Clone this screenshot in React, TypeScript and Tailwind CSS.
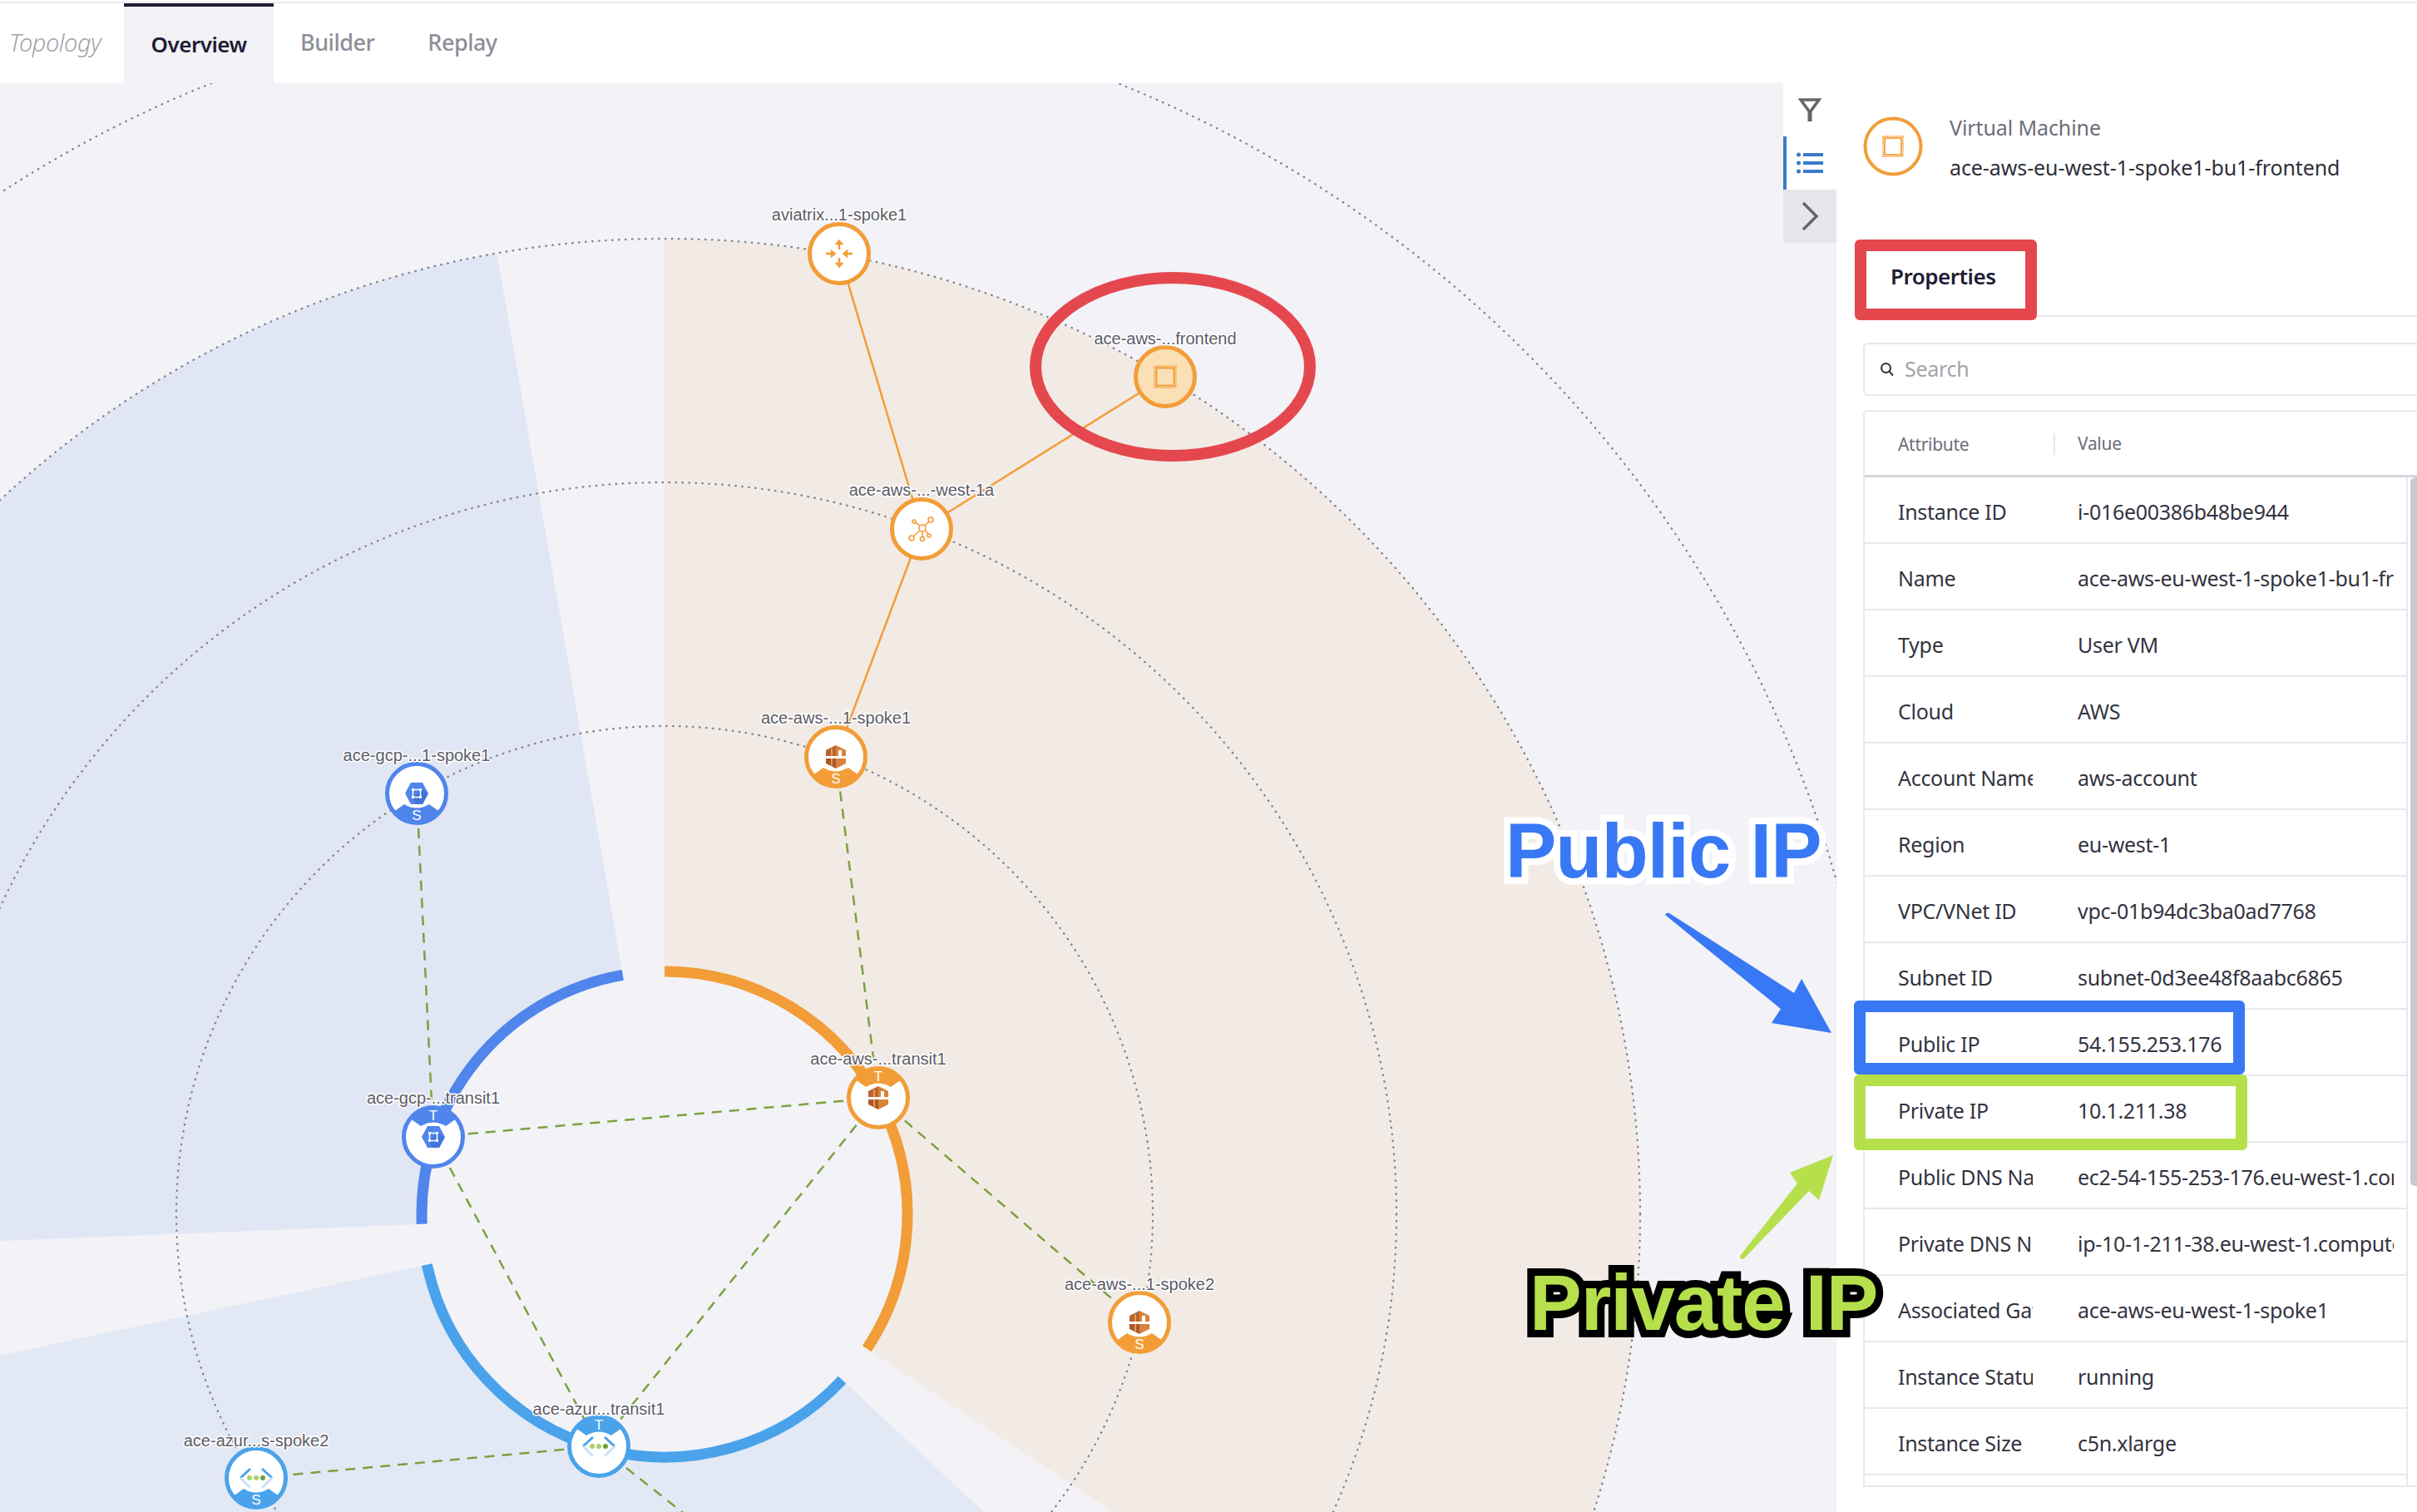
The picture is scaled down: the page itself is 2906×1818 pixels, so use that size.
import React from 'react';

const CX = 799;
const CY = 1460;

const pt = (r: number, deg: number) => {
  const a = (deg * Math.PI) / 180;
  return [CX + r * Math.cos(a), CY + r * Math.sin(a)];
};

// annular sector, angles clockwise from +x
const sector = (r0: number, r1: number, a0: number, a1: number) => {
  const [x0, y0] = pt(r1, a0);
  const [x1, y1] = pt(r1, a1);
  const [x2, y2] = pt(r0, a1);
  const [x3, y3] = pt(r0, a0);
  const large = a1 - a0 > 180 ? 1 : 0;
  return `M${x0} ${y0}A${r1} ${r1} 0 ${large} 1 ${x1} ${y1}L${x2} ${y2}A${r0} ${r0} 0 ${large} 0 ${x3} ${y3}Z`;
};

const arc = (r: number, a0: number, a1: number) => {
  const [x0, y0] = pt(r, a0);
  const [x1, y1] = pt(r, a1);
  const large = a1 - a0 > 180 ? 1 : 0;
  return `M${x0} ${y0}A${r} ${r} 0 ${large} 1 ${x1} ${y1}`;
};

const ORANGE = '#f29d38';
const GCP = '#5085ec';
const AZURE = '#4aa3ea';

const ChipIcon = () => (
  <g fill="none" stroke={ORANGE}>
    <rect x="-12.5" y="-12.5" width="25" height="25" strokeWidth="2.5" strokeDasharray="1.2 1.2" />
    <rect x="-10.5" y="-10.5" width="21" height="21" strokeWidth="1.8" />
  </g>
);

const ArrowsIcon = () => (
  <g fill={ORANGE} stroke={ORANGE} strokeWidth="2.5">
    <path d="M0 -5V-12M-16 0H-9M16 0H9M0 5V12" fill="none" />
    <path d="M0 -17L-5 -11H5ZM-4 0L-10 -5V5ZM4 0L10 -5V5ZM0 17L-5 11H5Z" strokeWidth="0.5" />
  </g>
);

const NetworkIcon = () => (
  <g fill="none" stroke={ORANGE} strokeWidth="1.6">
    <circle cx="1" cy="-1" r="4" />
    <circle cx="11" cy="-11" r="3" />
    <circle cx="-9" cy="-9" r="2" />
    <circle cx="-12" cy="11" r="3" />
    <circle cx="1" cy="12" r="2.5" />
    <circle cx="9" cy="8" r="2" />
    <path d="M4 -4L9 -9M-2 -4L-8 -8M-2 2L-10 9M1 3V10M4 1L8 6" />
  </g>
);

const AwsIcon = () => (
  <g>
    <path d="M-12 -8L0 -14V-1H-12Z" fill="#b8642c" />
    <path d="M0 -14L12 -8V-1H0Z" fill="#d98239" />
    <path d="M3 -8H7V-1H3Z" fill="#fff" />
    <path d="M-12 2H0V14L-12 8Z" fill="#a9592a" />
    <path d="M0 2H12V8L0 14Z" fill="#d98239" />
    <path d="M-5 -10V-1M-5 2V11" stroke="#e39a58" strokeWidth="2" />
  </g>
);

const GcpIcon = () => (
  <g>
    <path d="M-14 0L-7 -13H7L14 0L7 13H-7Z" fill={GCP} />
    <path d="M5 -5L14 0L7 13H-1L-5 5Z" fill="#4274da" />
    <rect x="-4.5" y="-4.5" width="9" height="9" fill="none" stroke="#fff" strokeWidth="1.5" />
    <path d="M-6 -6h3v3h-3zM3 -6h3v3h-3zM-6 3h3v3h-3zM3 3h3v3h-3z" fill="#fff" />
  </g>
);

const AzureIcon = () => (
  <g fill="none" strokeWidth="3">
    <path d="M-7 -11L-19 0M7 -11L19 0" stroke={AZURE} />
    <path d="M-19 0L-7 12M19 0L7 12" stroke="#c9e3f9" />
    <circle cx="-8" cy="0" r="3" fill="#a9d26a" stroke="none" />
    <circle cx="0" cy="0" r="3" fill="#a9d26a" stroke="none" />
    <circle cx="8" cy="0" r="3" fill="#6f9e3a" stroke="none" />
  </g>
);

type NodeProps = {
  x: number;
  y: number;
  label: string;
  labelY: number;
  color: string;
  badge?: 'S' | 'T';
  fill?: string;
  icon: React.ReactNode;
};

const Node = ({ x, y, label, labelY, color, badge, fill, icon }: NodeProps) => (
  <g>
    <g transform={`translate(${x} ${y})`}>
      <circle r="35.5" fill={fill || '#fff'} stroke={color} strokeWidth="5" />
      {badge === 'S' && (
        <>
          <path d="M-29 23L-15 13Q0 22 15 13L29 23A37 37 0 0 1 -29 23Z" fill={color} />
          <text y="32" textAnchor="middle" fontSize="17" fill="#fff" fontFamily="Liberation Sans, sans-serif">S</text>
        </>
      )}
      {badge === 'T' && (
        <>
          <path d="M-29 -23L-15 -13Q0 -22 15 -13L29 -23A37 37 0 0 0 -29 -23Z" fill={color} />
          <text y="-20" textAnchor="middle" fontSize="17" fill="#fff" fontFamily="Liberation Sans, sans-serif">T</text>
        </>
      )}
      {icon}
    </g>
    <text
      x={x}
      y={labelY + 7}
      textAnchor="middle"
      fontSize="20"
      fill="#5c5c66"
      stroke="#fff"
      strokeWidth="3"
      paintOrder="stroke"
      strokeLinejoin="round"
      fontFamily="Liberation Sans, sans-serif"
    >
      {label}
    </text>
  </g>
);

const dashed: number[][] = [
  [1005, 910, 1056, 1320],
  [501, 954, 521, 1367],
  [521, 1367, 1056, 1320],
  [521, 1367, 720, 1739],
  [1056, 1320, 720, 1739],
  [1056, 1320, 1370, 1590],
  [720, 1739, 308, 1777],
  [720, 1739, 825, 1822],
];

const solid: number[][] = [
  [1009, 305, 1108, 636],
  [1108, 636, 1401, 453],
  [1108, 636, 1005, 910],
];

const Topology = () => (
  <svg className="block h-full w-full" viewBox="0 100 2208 1718">
    <path d={sector(292, 1173, -90, 33.6)} fill="#f2ebe5" />
    <path d={sector(292, 1173, -182.3, -99.9)} fill="#e0e6f4" />
    <path d={sector(292, 1173, 43, 168)} fill="#e2e9f5" />
    {[587, 880, 1173, 1465].map((r) => (
      <circle key={r} cx={CX} cy={CY} r={r} fill="none" stroke="#85858e" strokeWidth="2.4" strokeLinecap="round" strokeDasharray="0.5 7.5" />
    ))}
    <path d={arc(292, -90, 33.6)} fill="none" stroke={ORANGE} strokeWidth="13" />
    <path d={arc(292, -182.3, -99.9)} fill="none" stroke={GCP} strokeWidth="13" />
    <path d={arc(292, 43, 168)} fill="none" stroke={AZURE} strokeWidth="13" />
    {dashed.map(([a, b, c, d], i) => (
      <line key={i} x1={a} y1={b} x2={c} y2={d} stroke="#7ba23f" strokeWidth="2.5" strokeDasharray="12 9" />
    ))}
    {solid.map(([a, b, c, d], i) => (
      <line key={i} x1={a} y1={b} x2={c} y2={d} stroke={ORANGE} strokeWidth="2.5" />
    ))}
    <Node x={1009} y={305} labelY={258} label="aviatrix...1-spoke1" color={ORANGE} icon={<ArrowsIcon />} />
    <Node x={1401} y={453} labelY={407} label="ace-aws-...frontend" color={ORANGE} fill="#fbdfb5" icon={<ChipIcon />} />
    <Node x={1108} y={636} labelY={589} label="ace-aws-...-west-1a" color={ORANGE} icon={<NetworkIcon />} />
    <Node x={1005} y={910} labelY={863} label="ace-aws-...1-spoke1" color={ORANGE} badge="S" icon={<AwsIcon />} />
    <Node x={1056} y={1320} labelY={1273} label="ace-aws-...transit1" color={ORANGE} badge="T" icon={<AwsIcon />} />
    <Node x={1370} y={1590} labelY={1544} label="ace-aws-...1-spoke2" color={ORANGE} badge="S" icon={<AwsIcon />} />
    <Node x={501} y={954} labelY={908} label="ace-gcp-...1-spoke1" color={GCP} badge="S" icon={<GcpIcon />} />
    <Node x={521} y={1367} labelY={1320} label="ace-gcp-...transit1" color={GCP} badge="T" icon={<GcpIcon />} />
    <Node x={720} y={1739} labelY={1694} label="ace-azur...transit1" color={AZURE} badge="T" icon={<AzureIcon />} />
    <Node x={308} y={1777} labelY={1732} label="ace-azur...s-spoke2" color={AZURE} badge="S" icon={<AzureIcon />} />
  </svg>
);

const rows = [
  ['Instance ID', 'i-016e00386b48be944'],
  ['Name', 'ace-aws-eu-west-1-spoke1-bu1-frontend'],
  ['Type', 'User VM'],
  ['Cloud', 'AWS'],
  ['Account Name', 'aws-account'],
  ['Region', 'eu-west-1'],
  ['VPC/VNet ID', 'vpc-01b94dc3ba0ad7768'],
  ['Subnet ID', 'subnet-0d3ee48f8aabc6865'],
  ['Public IP', '54.155.253.176'],
  ['Private IP', '10.1.211.38'],
  ['Public DNS Name', 'ec2-54-155-253-176.eu-west-1.compute.amazonaws.com'],
  ['Private DNS Name', 'ip-10-1-211-38.eu-west-1.compute.internal'],
  ['Associated Gateway', 'ace-aws-eu-west-1-spoke1'],
  ['Instance Status', 'running'],
  ['Instance Size', 'c5n.xlarge'],
];

const Toolbar = () => (
  <div className="absolute right-0 top-0 flex w-16 flex-col">
    <div className="flex h-16 items-center justify-center bg-white">
      <svg width="30" height="30" viewBox="0 0 30 30" fill="none" stroke="#666" strokeWidth="3.5">
        <path d="M4 3H26L15 18Z" />
        <path d="M15 17V29" strokeWidth="5" />
      </svg>
    </div>
    <div className="flex h-16 items-center justify-center border-l-4 border-[#3b7bc8] bg-white pr-1">
      <svg width="32" height="26" viewBox="0 0 32 26" fill="#3b7bc8">
        <circle cx="2.5" cy="3" r="2.5" />
        <circle cx="2.5" cy="13" r="2.5" />
        <circle cx="2.5" cy="23" r="2.5" />
        <rect x="8" y="1" width="24" height="4" />
        <rect x="8" y="11" width="24" height="4" />
        <rect x="8" y="21" width="24" height="4" />
      </svg>
    </div>
    <div className="flex h-16 items-center justify-center bg-[#e6e6ea]">
      <svg width="22" height="36" viewBox="0 0 22 36" fill="none" stroke="#666" strokeWidth="3.5">
        <path d="M3 2L19 18L3 34" />
      </svg>
    </div>
  </div>
);

const DetailPanel = () => (
  <div className="h-full w-[698px] shrink-0 overflow-hidden bg-white">
    <div className="flex h-[188px] items-start pl-8 pt-[37px]">
      <svg width="72" height="72" viewBox="-36 -36 72 72" className="mt-[3px] shrink-0">
        <circle r="33.5" fill="#fff" stroke={ORANGE} strokeWidth="4" />
        <g transform="scale(0.95)">
          <ChipIcon />
        </g>
      </svg>
      <div className="ml-[32px] tracking-[-0.1px]">
        <div className="text-[25px] leading-[32px] text-[#6d6d78]">Virtual Machine</div>
        <div className="mt-4 text-[25px] leading-[32px] text-[#2f2f3a]">ace-aws-eu-west-1-spoke1-bu1-frontend</div>
      </div>
    </div>
    <div className="flex h-[93px]">
      <div className="flex w-[241px] shrink-0 items-center pb-1 pl-[65px] text-[26px] font-semibold tracking-[-0.5px] text-[#1f1c33]">
        Properties
      </div>
      <div className="flex-1 border-b-2 border-[#e8e8ee]" />
    </div>
    <div className="ml-8 mt-[31px] flex h-[64px] w-[720px] items-center gap-[9px] rounded-md border-2 border-[#e8e8ee] pl-[18px]">
      <svg width="18" height="18" viewBox="0 0 18 18" fill="none" stroke="#33333f" strokeWidth="2">
        <circle cx="7.5" cy="7.5" r="5.5" />
        <path d="M11.5 11.5L16 16.5" />
      </svg>
      <span className="ml-[3px] text-[25px] tracking-[-0.3px] text-[#a3a3ab]">Search</span>
    </div>
    <div className="ml-8 mt-[17px] w-[720px] rounded-t-md border-l-2 border-t-2 border-[#e8e8ee]">
      <div className="flex h-[79px] items-center border-b-[3px] border-[#d6d6de] pl-[40px] pt-[2px] text-[21px] tracking-[-0.3px] text-[#6d6d78]">
        <span className="w-[189px] border-r-2 border-[#e8e8ee] leading-[26px]">Attribute</span>
        <span className="pl-[27px]">Value</span>
      </div>
      <div className="relative h-[1214px] w-[666px]">
        {rows.map(([k, v]) => (
          <div key={k} className="flex h-20 w-[653px] items-center border-b-2 border-[#e8e8ee] pl-[40px] pt-[5px] text-[25px] tracking-[-0.3px] text-[#33333f]">
            <span className="w-[162px] shrink-0 overflow-hidden whitespace-nowrap">{k}</span>
            <span className="ml-[54px] w-[380px] shrink-0 overflow-hidden whitespace-nowrap">{v}</span>
          </div>
        ))}
        <div className="absolute bottom-0 left-0 w-[666px] border-b-2 border-[#e8e8ee]" />
        <div className="absolute right-0 top-0 h-[852px] w-[10px] rounded-l-md bg-[#c9c9cf]" />
        <div className="absolute bottom-0 right-[13px] top-0 border-l-2 border-[#e8e8ee]" />
      </div>
    </div>
  </div>
);

const Annotations = () => (
  <>
    <svg className="absolute left-0 top-0" width="2906" height="1818" viewBox="0 0 2906 1818">
      <ellipse cx="1410" cy="441" rx="165" ry="107" fill="none" stroke="#e4484e" strokeWidth="14" />
      <path d="M2002 1100Q2003 1097 2007 1098L2157 1194L2166 1177L2202 1242L2130 1230L2141 1213Z" fill="#3878f5" />
      <path d="M2092 1510L2161 1423L2152 1410L2204 1389L2187 1443L2175 1432L2096 1514Q2092 1514 2092 1510Z" fill="#b5e04c" />
    </svg>
    <div className="absolute left-[2230px] top-[288px] h-[97px] w-[219px] rounded-md border-[14px] border-[#e4484e]" />
    <div className="absolute left-[2229px] top-[1203px] h-[89px] w-[470px] rounded-md border-[14px] border-[#3878f5]" />
    <div className="absolute left-[2229px] top-[1292px] h-[91px] w-[473px] rounded-md border-[14px] border-[#b5e04c]" />
    <div className="absolute left-[1810px] top-[977px] text-[92px] font-bold leading-none tracking-[-1px] text-[#3878f5] [-webkit-text-stroke:16px_#fff] [paint-order:stroke_fill] [font-family:'Liberation_Sans',sans-serif]">
      Public IP
    </div>
    <div className="absolute left-[1839px] top-[1520px] text-[94px] font-bold leading-none tracking-[-1px] text-[#b5e04c] [-webkit-text-stroke:18px_#000] [paint-order:stroke_fill] [font-family:'Liberation_Sans',sans-serif]">
      Private IP
    </div>
  </>
);

export default function App() {
  return (
    <div className="relative flex h-[1818px] w-[2906px] flex-col overflow-hidden bg-white font-['Noto_Sans',sans-serif]">
      <div className="mt-[2px] flex h-[98px] shrink-0 items-stretch border-t-2 border-[#e8e8ee] bg-white pl-[11px] text-[27px] tracking-[-0.5px]">
        <div className="flex w-[138px] items-center pb-[2px] text-[29px] font-light italic text-[#a3a3a8]">Topology</div>
        <div className="flex w-[180px] items-center justify-center border-t-4 border-[#1f1c33] bg-[#f2f2f7] pb-[2px] text-[26px] font-semibold text-[#1f1c33]">Overview</div>
        <div className="flex items-center px-8 pb-[2px] font-medium text-[#8e8e98]">Builder</div>
        <div className="flex items-center px-8 pb-[2px] font-medium text-[#8e8e98]">Replay</div>
      </div>
      <div className="flex min-h-0 flex-1">
        <div className="relative h-full flex-1 bg-[#f2f2f7]">
          <Topology />
          <Toolbar />
        </div>
        <DetailPanel />
      </div>
      <Annotations />
    </div>
  );
}
